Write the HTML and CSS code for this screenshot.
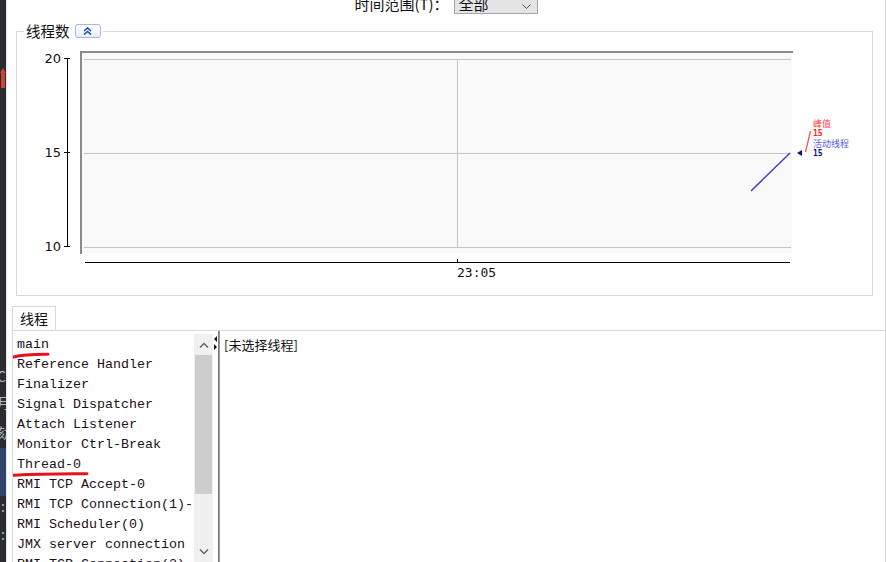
FILE: index.html
```html
<!DOCTYPE html>
<html lang="zh-CN">
<head>
<meta charset="utf-8">
<title>线程</title>
<link rel="stylesheet" href="styles.css">
</head>
<body>
<div class="app">
  <aside class="ide-strip">
    <div class="strip-arrow">
      <svg width="6" height="20" viewBox="0 0 6 20"><path d="M0 5 L3 0 L6 5 Z M1 5 H5 V20 H1 Z" fill="#c9453a"/></svg>
    </div>
    <div class="strip-glyph g1">C</div>
    <div class="strip-glyph g2">月</div>
    <div class="strip-glyph g3">劾</div>
    <div class="strip-select"></div>
    <div class="strip-glyph g4">:</div>
    <div class="strip-glyph g5">:</div>
  </aside>
  <main class="main">
    <div class="toolbar">
      <span class="range-label">时间范围(T)：</span>
      <div class="select">
        <span class="select-value">全部</span>
        <svg class="select-chev" width="9" height="5" viewBox="0 0 9 5"><path d="M0.5 0.5 L4.5 4.5 L8.5 0.5" fill="none" stroke="#555" stroke-width="1"/></svg>
      </div>
    </div>

    <section class="chart-group">
      <div class="group-legend">
        <span class="legend-title">线程数</span>
        <span class="collapse-btn">
          <svg width="9" height="8" viewBox="0 0 9 8"><path d="M1 4 L4.5 1 L8 4 M1 7.5 L4.5 4.5 L8 7.5" fill="none" stroke="#1c48b8" stroke-width="1.6"/></svg>
        </span>
      </div>
      <svg class="chart" width="855" height="263" viewBox="17 32 855 263">
        <line x1="67.5" y1="58" x2="67.5" y2="247" stroke="#000" stroke-width="1"/>
        <line x1="64" y1="58.5" x2="70" y2="58.5" stroke="#000"/>
        <line x1="64" y1="152.5" x2="70" y2="152.5" stroke="#000"/>
        <line x1="64" y1="246.5" x2="70" y2="246.5" stroke="#000"/>
        <text x="61" y="63" text-anchor="end" class="axis-label">20</text>
        <text x="61" y="157" text-anchor="end" class="axis-label">15</text>
        <text x="61" y="251" text-anchor="end" class="axis-label">10</text>
        <rect x="80" y="51" width="712" height="202" fill="#f9f9f9"/>
        <line x1="80" y1="52" x2="793" y2="52" stroke="#8a8a8a" stroke-width="2"/>
        <line x1="81" y1="51" x2="81" y2="254" stroke="#8a8a8a" stroke-width="2"/>
        <line x1="84" y1="59.5" x2="791" y2="59.5" stroke="#c4c4c4"/>
        <line x1="84" y1="153.5" x2="791" y2="153.5" stroke="#c4c4c4"/>
        <line x1="84" y1="247.5" x2="791" y2="247.5" stroke="#c4c4c4"/>
        <line x1="457.5" y1="59" x2="457.5" y2="247" stroke="#c4c4c4"/>
        <line x1="85" y1="262.5" x2="790" y2="262.5" stroke="#000"/>
        <line x1="457.5" y1="259" x2="457.5" y2="263" stroke="#000"/>
        <text x="457" y="277" class="time-label">23:05</text>
        <line x1="751" y1="191" x2="790" y2="153" stroke="#5336c4" stroke-width="1.5"/>
        <path d="M797 153 L802 150 L802 156 Z" fill="#101080"/>
        <line x1="810.5" y1="131" x2="805.5" y2="152" stroke="#ff4a4a" stroke-width="1.2"/>
        <text x="813" y="127" class="peak-name">峰值</text>
        <text x="813" y="136" class="peak-val">15</text>
        <text x="813" y="147" class="live-name">活动线程</text>
        <text x="813" y="156" class="live-val">15</text>
      </svg>
    </section>

    <div class="tabs">
      <div class="tab">线程</div>
    </div>
    <div class="tab-panel">
      <ul class="thread-list">
        <li>main</li>
        <li>Reference Handler</li>
        <li>Finalizer</li>
        <li>Signal Dispatcher</li>
        <li>Attach Listener</li>
        <li>Monitor Ctrl-Break</li>
        <li>Thread-0</li>
        <li>RMI TCP Accept-0</li>
        <li>RMI TCP Connection(1)-</li>
        <li>RMI Scheduler(0)</li>
        <li>JMX server connection</li>
        <li>RMI TCP Connection(2)-</li>
      </ul>
      <div class="scrollbar">
        <div class="sb-btn">
          <svg width="10" height="6" viewBox="0 0 10 6"><path d="M1 5.5 L5 1.5 L9 5.5" fill="none" stroke="#606060" stroke-width="1.4"/></svg>
        </div>
        <div class="sb-thumb"></div>
        <div class="sb-track"></div>
        <div class="sb-btn">
          <svg width="10" height="6" viewBox="0 0 10 6"><path d="M1 0.5 L5 4.5 L9 0.5" fill="none" stroke="#606060" stroke-width="1.4"/></svg>
        </div>
      </div>
      <div class="splitter">
        <svg width="4" height="14" viewBox="0 0 4 14"><path d="M0 3 L3 0 L3 6 Z M0 8 L3 11 L0 14 Z" fill="#111"/></svg>
      </div>
      <div class="detail">[未选择线程]</div>
      <svg class="marks" width="100" height="160" viewBox="0 0 100 160">
        <path d="M0.5 26 Q 12 23 35 23.2" fill="none" stroke="#e3141b" stroke-width="3" stroke-linecap="round"/>
        <path d="M1 144.3 Q 30 142.5 74 142.8" fill="none" stroke="#e3141b" stroke-width="3" stroke-linecap="round"/>
      </svg>
    </div>
  </main>
</div>
</body>
</html>
```

FILE: styles.css
```css
html, body {
  margin: 0;
  padding: 0;
  width: 886px;
  height: 562px;
  overflow: hidden;
  background: #ffffff;
}

.app {
  display: flex;
  height: 562px;
  font-family: "Noto Sans CJK SC", "Liberation Sans", sans-serif;
  color: #111;
}

/* dark IDE strip on the left */
.ide-strip {
  width: 6px;
  flex: none;
  background: #2b2d30;
  display: flex;
  flex-direction: column;
  overflow: hidden;
  color: #a9b7c6;
  font-size: 14px;
  line-height: 16px;
}
.strip-arrow { margin-top: 68px; height: 20px; }
.strip-arrow svg { display: block; }
.strip-glyph { margin-left: -3px; white-space: nowrap; }
.g1 { margin-top: 280px; }
.g2 { margin-top: 10px; }
.g3 { margin-top: 14px; }
.strip-select { height: 48px; margin-top: 8px; background: #2e436e; }
.g4 { margin-top: 2px; margin-left: 1px; }
.g5 { margin-top: 12px; margin-left: 1px; }

.main {
  flex: 1;
  display: flex;
  flex-direction: column;
  border-right: 1px solid #dadada;
  border-left: 1px solid #e4e4e4;
  min-width: 0;
}

/* toolbar */
.toolbar {
  height: 24px;
  margin-top: -9px;
  display: flex;
  justify-content: center;
  align-items: center;
  gap: 5px;
}
.range-label {
  font-size: 15px;
  color: #111;
}
.select {
  width: 84px;
  height: 22px;
  border: 1px solid #a5a5a5;
  background: #e4e4e4;
  display: flex;
  align-items: center;
  justify-content: space-between;
  padding: 0 6px 0 4px;
  box-sizing: border-box;
}
.select-value { font-size: 15px; }
.select-chev { display: block; margin-top: 6px; }

/* chart group box */
.chart-group {
  position: relative;
  margin: 16px 0 0 9px;
  width: 855px;
  height: 263px;
  border: 1px solid #d9d9d9;
}
.group-legend {
  position: absolute;
  left: 7px;
  top: -9px;
  display: flex;
  align-items: center;
  gap: 5px;
  background: #ffffff;
  padding: 0 2px;
  height: 16px;
}
.legend-title {
  font-size: 14.5px;
  line-height: 16px;
}
.collapse-btn {
  width: 24px;
  height: 12px;
  border: 1px solid #a7b7de;
  border-radius: 3px;
  background: linear-gradient(#ffffff, #e9eefa);
  display: flex;
  align-items: center;
  justify-content: center;
}
.collapse-btn svg { display: block; }
.chart { display: block; }
.axis-label {
  font-family: "DejaVu Sans", sans-serif;
  font-size: 13px;
  fill: #111;
}
.time-label {
  font-family: "DejaVu Sans Mono", monospace;
  font-size: 13px;
  fill: #111;
}
.peak-name { font-size: 9px; fill: #ff4040; }
.peak-val { font-family: "DejaVu Sans Mono", monospace; font-size: 8px; font-weight: bold; fill: #ff2020; }
.live-name { font-size: 9px; fill: #5a5ae0; }
.live-val { font-family: "DejaVu Sans Mono", monospace; font-size: 8px; font-weight: bold; fill: #101080; }

/* tabs */
.tabs {
  display: flex;
  margin: 10px 0 0 5px;
  position: relative;
  z-index: 1;
}
.tab {
  width: 44px;
  height: 24px;
  border: 1px solid #d9d9d9;
  border-bottom: none;
  background: #ffffff;
  font-size: 14px;
  line-height: 22px;
  padding-left: 7px;
  box-sizing: border-box;
}
.tab-panel {
  position: relative;
  flex: 1;
  margin-left: 5px;
  border-top: 1px solid #d9d9d9;
  border-left: 1px solid #d9d9d9;
  display: flex;
  min-height: 0;
}

.thread-list {
  list-style: none;
  margin: 0;
  padding: 4px 0 0 4px;
  width: 181px;
  box-sizing: border-box;
  font-family: "Liberation Mono", monospace;
  font-size: 13.33px;
  line-height: 20px;
  color: #1a1020;
  white-space: nowrap;
  overflow: hidden;
}
.thread-list li { height: 20px; }

.scrollbar {
  width: 19px;
  margin-top: 3px;
  background: #f0f0f0;
  display: flex;
  flex-direction: column;
}
.sb-btn {
  height: 21px;
  display: flex;
  align-items: center;
  justify-content: center;
}
.sb-btn svg { display: block; }
.sb-thumb {
  height: 139px;
  margin: 0 1px;
  background: #cdcdcd;
}
.sb-track { flex: 1; }

.splitter {
  width: 6px;
  border-right: 1px solid #7a7a7a;
  padding-top: 5px;
  display: flex;
  justify-content: flex-end;
  box-sizing: border-box;
}
.splitter svg { display: block; }

.detail {
  flex: 1;
  padding: 4px 0 0 4px;
  font-size: 13px;
  line-height: 20px;
  color: #111;
  border-left: 1px solid #9a9a9a;
}

.marks {
  position: absolute;
  left: 0;
  top: 0;
  pointer-events: none;
}
```
